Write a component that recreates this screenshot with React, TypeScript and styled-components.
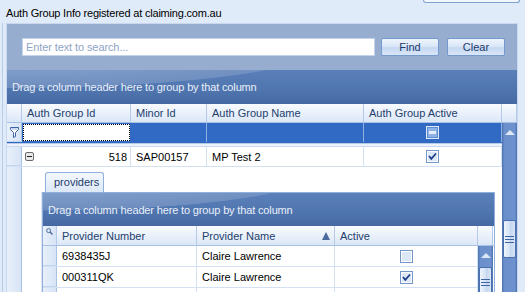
import React from 'react';
import styled, { createGlobalStyle } from 'styled-components';

const GlobalStyle = createGlobalStyle`
  html, body {
    margin: 0;
    padding: 0;
  }
  body {
    background: #e0ebfa;
    font-family: "Liberation Sans", Arial, sans-serif;
    font-size: 11px;
    overflow: hidden;
  }
`;

const Page = styled.div`
  width: 525px;
  height: 292px;
  overflow: hidden;
  display: flex;
  flex-direction: column;
`;

const TopBar = styled.div`
  height: 23px;
  flex: none;
  display: flex;
  align-items: flex-start;
`;

const Title = styled.div`
  padding: 7px 0 0 6px;
  color: #000;
  letter-spacing: -0.2px;
`;

const ButtonStub = styled.div`
  margin-left: auto;
  margin-right: 5px;
  width: 95px;
  height: 2px;
  border: 1px solid #7da2ce;
  border-top: none;
  border-radius: 0 0 3px 3px;
  background: #f3f7fd;
`;

const Frame = styled.div`
  flex: 1;
  min-height: 0;
  display: flex;
  margin-left: 2px;
  border-left: 1px solid #b9cdea;
  padding-left: 3px;
`;

const GridPanel = styled.div`
  width: 510px;
  border: 1px solid #c9d8ee;
  border-bottom: none;
  display: flex;
  flex-direction: column;
  overflow: hidden;
`;

const SearchBar = styled.div`
  height: 46px;
  flex: none;
  background: #97adcf;
  display: flex;
  align-items: flex-start;
  padding: 14px 0 0 15px;
  box-sizing: border-box;
  gap: 6px;
`;

const SearchInput = styled.div`
  width: 353px;
  height: 18px;
  box-sizing: border-box;
  background: #fff;
  border: 1px solid #c3d3ea;
  color: #8fa5c6;
  padding: 2px 0 0 3px;
  letter-spacing: -0.1px;
`;

const ToolButton = styled.div<{ $gap?: number }>`
  width: 58px;
  height: 18px;
  box-sizing: border-box;
  margin-left: ${(p) => p.$gap ?? 0}px;
  border: 1px solid #7399cf;
  border-radius: 2px;
  background: linear-gradient(180deg, #eef4fd 0%, #dbe7f8 45%, #c5d8f2 55%, #d9e6f7 100%);
  color: #1e3a6b;
  display: flex;
  align-items: center;
  justify-content: center;
`;

const GroupPanel = styled.div<{ $height: number }>`
  height: ${(p) => p.$height}px;
  flex: none;
  box-sizing: border-box;
  padding-left: 5px;
  display: flex;
  align-items: center;
  color: #e9eff8;
  letter-spacing: -0.15px;
  background:
    radial-gradient(ellipse 85% 160% at 0% -60%, rgba(150, 175, 212, 0.9) 0%, rgba(128, 156, 200, 0.6) 70%, rgba(0, 0, 0, 0) 71%),
    linear-gradient(180deg, #5b80b9 0%, #5076b0 55%, #4669a3 100%);
`;

const HeaderRow = styled.div<{ $cols: string; $height: number }>`
  display: grid;
  grid-template-columns: ${(p) => p.$cols};
  height: ${(p) => p.$height}px;
  flex: none;
  border-bottom: 1px solid #a8c0e2;
  box-sizing: border-box;
`;

const HeaderCell = styled.div`
  position: relative;
  background: linear-gradient(180deg, #f8fbfe 0%, #eaf1fb 50%, #dbe7f7 100%);
  border-right: 1px solid #b5cae8;
  color: #24406d;
  padding-left: 5px;
  display: flex;
  align-items: center;
  white-space: nowrap;
  overflow: hidden;
`;

const SortArrow = styled.span`
  margin-left: auto;
  margin-right: 4px;
  width: 0;
  height: 0;
  border-left: 4px solid transparent;
  border-right: 4px solid transparent;
  border-bottom: 8px solid #4b6a9c;
`;

const BodyArea = styled.div`
  flex: 1;
  min-height: 0;
  display: flex;
`;

const MainColumn = styled.div`
  width: 495px;
  display: flex;
  flex-direction: column;
`;

const Row = styled.div<{ $cols: string; $height: number; $selected?: boolean }>`
  display: grid;
  grid-template-columns: ${(p) => p.$cols};
  height: ${(p) => p.$height}px;
  flex: none;
  background: ${(p) => (p.$selected ? '#316ac5' : '#fff')};
  border-bottom: 1px solid ${(p) => (p.$selected ? '#316ac5' : '#d4e1f2')};
  box-sizing: border-box;
`;

const Indicator = styled.div`
  background: linear-gradient(90deg, #e8f0fb, #d7e4f5);
  border-right: 1px solid #a9c1e3;
  border-bottom: 1px solid #c3d5ee;
  display: flex;
  align-items: center;
  justify-content: center;
`;

const Cell = styled.div<{ $align?: 'left' | 'right' | 'center'; $selected?: boolean }>`
  border-right: 1px solid ${(p) => (p.$selected ? '#8fb0e0' : '#d4e1f2')};
  display: flex;
  align-items: center;
  justify-content: ${(p) => (p.$align === 'right' ? 'flex-end' : p.$align === 'center' ? 'center' : 'flex-start')};
  padding: 0 ${(p) => (p.$align === 'right' ? 3 : 0)}px 0 ${(p) => (p.$align === 'left' || !p.$align ? 5 : 0)}px;
  color: #000;
  white-space: nowrap;
  overflow: hidden;
`;

const FilterEditor = styled.div`
  margin: 1px;
  background: #fff;
  border: 1px dotted #000;
`;

const Separator = styled.div`
  height: 4px;
  flex: none;
  box-sizing: border-box;
  background: #eef3fb;
  border-top: 1px solid #b7cbe8;
  border-bottom: 1px solid #c9d9ef;
`;

const DetailArea = styled.div`
  flex: 1;
  display: flex;
`;

const DetailIndicator = styled.div`
  width: 15px;
  box-sizing: border-box;
  background: linear-gradient(90deg, #e8f0fb, #d7e4f5);
  border-right: 1px solid #a9c1e3;
`;

const DetailBody = styled.div`
  flex: 1;
  background: #fff;
  padding: 5px 7px 0 20px;
  display: flex;
  flex-direction: column;
`;

const Tab = styled.div`
  margin-left: 3px;
  width: 59px;
  height: 20px;
  box-sizing: border-box;
  border: 1px solid #8fb0dc;
  border-bottom: none;
  border-radius: 3px 3px 0 0;
  background: linear-gradient(180deg, #f4f8fd, #dce8f7);
  color: #1d3b6c;
  padding: 3px 0 0 8px;
`;

const NestedGrid = styled.div`
  flex: 1;
  display: flex;
  flex-direction: column;
  border: 1px solid #8fb0dc;
  border-bottom: none;
  box-shadow: -1px 0 0 #dbe4f0;
`;

const NestedBody = styled.div`
  flex: 1;
  display: flex;
`;

const NestedRows = styled.div`
  width: 435px;
  display: flex;
  flex-direction: column;
`;

const ScrollTrack = styled.div`
  width: 15px;
  box-sizing: border-box;
  background: linear-gradient(90deg, #4b72b0 0%, #6a8fcb 15%, #6d92cd 85%, #4b72b0 100%);
  display: flex;
  flex-direction: column;
  align-items: center;
`;

const ScrollArrow = styled.div`
  height: 18px;
  flex: none;
  width: 100%;
  display: flex;
  align-items: center;
  justify-content: center;
`;

const ArrowUp = styled.span`
  width: 0;
  height: 0;
  border-left: 5px solid transparent;
  border-right: 5px solid transparent;
  border-bottom: 5px solid #dde8f7;
`;

const ScrollThumb = styled.div<{ $top: number; $height: number }>`
  margin-top: ${(p) => p.$top}px;
  width: 13px;
  height: ${(p) => p.$height}px;
  flex: none;
  box-sizing: border-box;
  border: 1px solid #4a70ad;
  border-radius: 2px;
  background: linear-gradient(90deg, #eef4fc 0%, #d4e2f5 50%, #c3d6f0 55%, #d8e5f6 100%);
  display: flex;
  align-items: center;
  justify-content: center;
`;

const Grip = () => (
  <svg width="9" height="7" viewBox="0 0 9 7">
    <rect x="0" y="0" width="9" height="1" fill="#3f64a3" />
    <rect x="0" y="3" width="9" height="1" fill="#3f64a3" />
    <rect x="0" y="6" width="9" height="1" fill="#3f64a3" />
  </svg>
);

const Checkbox = ({ checked, mixed }: { checked?: boolean; mixed?: boolean }) => (
  <svg width="13" height="13" viewBox="0 0 13 13">
    {mixed ? (
      <>
        <rect x="0.5" y="0.5" width="12" height="12" fill="#5f8ed6" stroke="#dfe9f8" />
        <rect x="2" y="2" width="9" height="9" fill="#8db2e8" />
        <rect x="3" y="5" width="7" height="3" fill="#e4eefb" />
      </>
    ) : (
      <>
        <rect x="0.5" y="0.5" width="12" height="12" fill="#fff" stroke="#7396cb" />
        <rect x="2" y="2" width="9" height="9" fill="#dde8f6" />
        {checked && <path d="M3 6 L5.3 8.8 L10 3.5" fill="none" stroke="#1d3f8a" strokeWidth="1.8" />}
      </>
    )}
  </svg>
);

const FilterIcon = () => (
  <svg width="9" height="11" viewBox="0 0 9 11">
    <path d="M0.5 0.5 H8.5 V2.5 L5.5 5.5 V9.5 L3.5 10.5 V5.5 L0.5 2.5 Z" fill="#fff" stroke="#3c63a5" />
    <rect x="1.5" y="1.5" width="6" height="1" fill="#8fb0dc" />
  </svg>
);

const ExpandIcon = () => (
  <svg width="9" height="9" viewBox="0 0 9 9">
    <rect x="0.5" y="0.5" width="8" height="8" rx="1.5" fill="#e9e9e9" stroke="#6b6b6b" />
    <rect x="2" y="4" width="5" height="1" fill="#222" />
  </svg>
);

const SearchIcon = () => (
  <svg width="7" height="7" viewBox="0 0 7 7">
    <circle cx="2.6" cy="2.6" r="2" fill="none" stroke="#4a6a9c" strokeWidth="1" />
    <path d="M4 4 L6.5 6.5" stroke="#4a6a9c" strokeWidth="1.4" />
  </svg>
);

const IconCorner = styled.div`
  background: linear-gradient(90deg, #e8f0fb, #d7e4f5);
  border-right: 1px solid #b5cae8;
  display: flex;
  padding: 2px 0 0 3px;
`;

const mainCols = '15px 109px 76px 157px 138px 15px';
const bodyCols = '15px 109px 76px 157px 138px';
const nestedHeadCols = '14px 140px 138px 143px 15px';
const nestedCols = '14px 140px 138px 143px';

const providers = [
  { number: '6938435J', name: 'Claire Lawrence', active: false },
  { number: '000311QK', name: 'Claire Lawrence', active: true },
  { number: '', name: '', active: false },
];

export default function App() {
  return (
    <Page>
      <GlobalStyle />
      <TopBar>
        <Title>Auth Group Info registered at claiming.com.au</Title>
        <ButtonStub />
      </TopBar>
      <Frame>
        <GridPanel>
          <SearchBar>
            <SearchInput>Enter text to search...</SearchInput>
            <ToolButton>Find</ToolButton>
            <ToolButton $gap={2}>Clear</ToolButton>
          </SearchBar>
          <GroupPanel $height={34}>Drag a column header here to group by that column</GroupPanel>
          <HeaderRow $cols={mainCols} $height={19}>
            <HeaderCell />
            <HeaderCell>Auth Group Id</HeaderCell>
            <HeaderCell>Minor Id</HeaderCell>
            <HeaderCell>Auth Group Name</HeaderCell>
            <HeaderCell>Auth Group Active</HeaderCell>
            <HeaderCell />
          </HeaderRow>
          <BodyArea>
            <MainColumn>
              <Row $cols={bodyCols} $height={20} $selected>
                <Indicator>
                  <FilterIcon />
                </Indicator>
                <FilterEditor />
                <Cell $selected />
                <Cell $selected />
                <Cell $selected $align="center">
                  <Checkbox mixed />
                </Cell>
              </Row>
              <Separator />
              <Row $cols={bodyCols} $height={20}>
                <Indicator />
                <Cell $align="right" style={{ justifyContent: 'space-between', paddingLeft: 3 }}>
                  <ExpandIcon />
                  518
                </Cell>
                <Cell>SAP00157</Cell>
                <Cell>MP Test 2</Cell>
                <Cell $align="center">
                  <Checkbox checked />
                </Cell>
              </Row>
              <DetailArea>
                <DetailIndicator />
                <DetailBody>
                  <Tab>providers</Tab>
                  <NestedGrid>
                    <GroupPanel $height={33}>Drag a column header here to group by that column</GroupPanel>
                    <HeaderRow $cols={nestedHeadCols} $height={20}>
                      <IconCorner>
                        <SearchIcon />
                      </IconCorner>
                      <HeaderCell>Provider Number</HeaderCell>
                      <HeaderCell>
                        Provider Name
                        <SortArrow />
                      </HeaderCell>
                      <HeaderCell>Active</HeaderCell>
                      <HeaderCell />
                    </HeaderRow>
                    <NestedBody>
                      <NestedRows>
                        {providers.map((p, i) => (
                          <Row key={i} $cols={nestedCols} $height={21}>
                            <Indicator />
                            <Cell>{p.number}</Cell>
                            <Cell>{p.name}</Cell>
                            <Cell $align="center">{p.number && <Checkbox checked={p.active} />}</Cell>
                          </Row>
                        ))}
                      </NestedRows>
                      <ScrollTrack>
                        <ScrollArrow>
                          <ArrowUp />
                        </ScrollArrow>
                        <ScrollThumb $top={3} $height={30}>
                          <Grip />
                        </ScrollThumb>
                      </ScrollTrack>
                    </NestedBody>
                  </NestedGrid>
                </DetailBody>
              </DetailArea>
            </MainColumn>
            <ScrollTrack>
              <ScrollArrow>
                <ArrowUp />
              </ScrollArrow>
              <ScrollThumb $top={79} $height={38}>
                <Grip />
              </ScrollThumb>
            </ScrollTrack>
          </BodyArea>
        </GridPanel>
      </Frame>
    </Page>
  );
}
